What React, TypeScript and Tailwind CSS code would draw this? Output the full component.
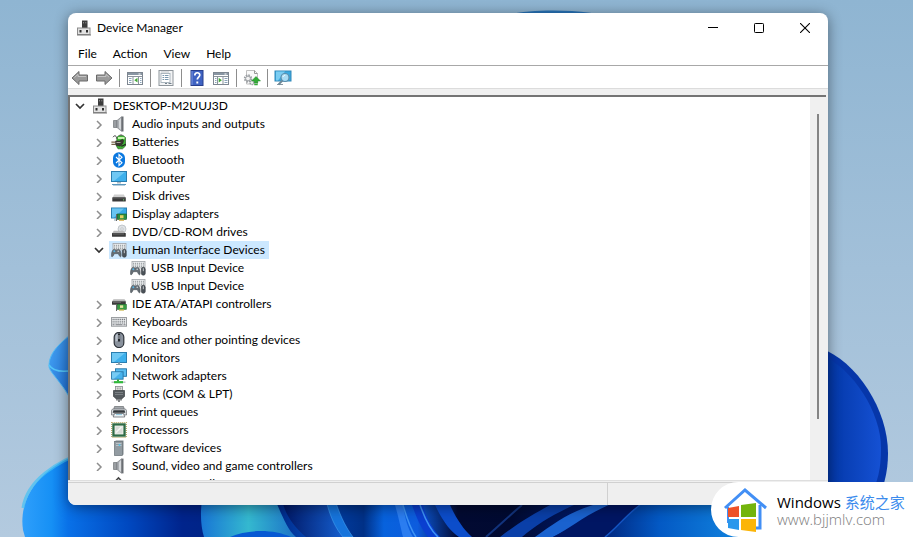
import { useState } from "react";
import type { ReactNode } from "react";

function Icon({ children }: { children: ReactNode }) {
  return (
    <svg width="16" height="16" viewBox="0 0 16 16" className="shrink-0" aria-hidden="true">
      {children}
    </svg>
  );
}

const DeviceIcon = () => (
  <Icon>
    <rect x="6" y="0.5" width="5.5" height="7.5" fill="#3c3c3c" />
    <path d="M7.5 2v1.4M9.8 2v1.4" stroke="#9a9a9a" strokeWidth="0.8" />
    <path d="M8.5 8v1" stroke="#333" />
    <rect x="1.5" y="8" width="12.5" height="6.5" fill="#e2e2e2" stroke="#8c8c8c" />
    <rect x="3.5" y="10" width="2" height="2.5" fill="#2d2d2d" />
    <rect x="10" y="10" width="2" height="2.5" fill="#2d2d2d" />
    <path d="M1 15h14" stroke="#777" />
  </Icon>
);

const SpeakerIcon = () => (
  <Icon>
    <path d="M2.5 4.5h3.5v7H2.5z" fill="#9a9ea2" stroke="#62666a" strokeWidth="0.6" />
    <path d="M6 4.5 10.5 0.8v14.4L6 11.5z" fill="#a9adb1" stroke="#777b80" strokeWidth="0.6" />
    <path d="M8 4.2 10 2v12l-2-2z" fill="#d4d7da" />
    <path d="M11.5 0.6v14.8" stroke="#6a6e73" strokeWidth="2" />
  </Icon>
);

const BatteryIcon = () => (
  <Icon>
    <path d="M6 3.2 8 1.5h4l2.5 2v8.5l-3 2.8H7L5.5 12z" fill="#3fb535" stroke="#2b5d25" strokeWidth="0.7" />
    <path d="M7 4h6.5" stroke="#c4f5ab" strokeWidth="2" />
    <path d="M8.3 1.4c1-.8 2.5-.8 3.4 0" stroke="#777" fill="none" />
    <path d="M2 3.2C3.5.6 6 2 5.4 4.6" stroke="#333" fill="none" strokeWidth="0.9" />
    <path d="M4.5 7h4l3-1.8 1.2 1.3-1 3.3L9 12.2 4.5 11z" fill="#3b3833" stroke="#201f1c" strokeWidth="0.5" />
    <path d="M5.5 8.5h4" stroke="#a9a49c" />
    <path d="M0.4 8.2h4M0.4 10.4h4" stroke="#77634a" strokeWidth="1.2" />
    <path d="M10 12c1.8.5 3-1.2 4.8-1.6" stroke="#222" fill="none" strokeWidth="1.1" />
  </Icon>
);

const BluetoothIcon = () => (
  <Icon>
    <rect x="2" y="0.2" width="12" height="15.6" rx="5.8" fill="#0a78e0" />
    <path d="m5 5 6 5.8-3 2.7V2.5l3 2.7L5 11" fill="none" stroke="#fff" strokeWidth="1.1" />
  </Icon>
);

const ComputerIcon = () => (
  <Icon>
    <rect x="0.5" y="1.5" width="15" height="10" fill="#3eb0ec" stroke="#2a7eb0" />
    <path d="M1 2h13L3 11H1z" fill="#83d3f8" opacity="0.7" />
    <path d="M6 12h4v1.5H6z" fill="#a9bac4" />
    <path d="M1 14.5h14" stroke="#5b96bd" />
    <path d="M2 15.5h12" stroke="#b7cfdd" />
  </Icon>
);

const MonitorIcon = () => (
  <Icon>
    <rect x="0.5" y="2.5" width="15" height="10" fill="#3eb0ec" stroke="#2a7eb0" />
    <path d="M1 3h13L3 12H1z" fill="#83d3f8" opacity="0.7" />
    <path d="M7 12.5h2V14H7z" fill="#8aa0ad" />
    <path d="M5 14.5h6" stroke="#8aa0ad" />
  </Icon>
);

const DiskIcon = () => (
  <Icon>
    <path d="M3.2 6.5h9.6l2 3.5H1.3z" fill="#cfcfcf" />
    <rect x="1.3" y="9.3" width="13.5" height="4.2" rx="0.6" fill="#3a3a3a" />
    <path d="M2 10h12" stroke="#6b6b6b" strokeWidth="0.8" />
    <circle cx="12.6" cy="11.8" r="0.6" fill="#6fdc6f" />
  </Icon>
);

const DisplayIcon = () => (
  <Icon>
    <rect x="0.5" y="2" width="15" height="10" fill="#37a9e8" stroke="#2a7eb0" />
    <path d="M1 2.5h12L3 11.5H1z" fill="#7ed0f7" opacity="0.7" />
    <path d="M3 14h3" stroke="#8aa0ad" />
    <path d="M5.5 8v7" stroke="#666" />
    <rect x="6.3" y="8" width="9.2" height="5.5" fill="#2c8e3f" stroke="#175f27" strokeWidth="0.6" />
    <rect x="9" y="9.2" width="3.5" height="3" fill="#e3cf61" />
    <path d="M8 14.2h5" stroke="#d2a63b" strokeWidth="1.2" />
  </Icon>
);

const DvdIcon = () => (
  <Icon>
    <circle cx="11" cy="5" r="4" fill="#dfe3e6" stroke="#b2b7bb" strokeWidth="0.7" />
    <circle cx="11" cy="5" r="1.2" fill="#fff" stroke="#a3a8ac" strokeWidth="0.6" />
    <path d="M2.8 6.8h9.6l2.2 2.6H1z" fill="#b8b8b8" />
    <rect x="1" y="9" width="13.8" height="3.8" rx="0.6" fill="#3a3a3a" />
    <path d="M2 10h11" stroke="#777" strokeWidth="0.8" />
  </Icon>
);

const HidIcon = () => (
  <Icon>
    <rect x="2" y="1.5" width="13" height="6.5" fill="#eceeef" stroke="#a0a4a8" strokeWidth="0.8" />
    <path d="M3 3.3h11M3 5h11M3 6.7h11" stroke="#868b90" strokeDasharray="1.2 0.8" strokeWidth="0.9" />
    <path d="M0.6 14.5c-.5-3 .5-6.5 2-7 1-.4 1.6.4 2.7.4s1.7-.8 2.7-.4c1.5.5 2.5 4 2 7-.7 1-1.7-.4-2.7-2.8h-4c-1 2.4-2 3.8-2.7 2.8z" fill="#666e75" stroke="#434a50" strokeWidth="0.5" />
    <circle cx="3.3" cy="9.3" r="1" fill="#53b4e7" />
    <circle cx="7.2" cy="9.3" r="0.8" fill="#d2d6d9" />
    <rect x="11.3" y="7.3" width="4" height="8" rx="2" fill="#4b5258" stroke="#30353a" strokeWidth="0.5" />
    <path d="M13.3 8.2v3" stroke="#c8ccd0" />
  </Icon>
);

const IdeIcon = () => (
  <Icon>
    <path d="M2.5 3.2h11l1.8 2.3H1z" fill="#b8b8b8" />
    <rect x="1" y="5.2" width="13.8" height="3.6" rx="0.5" fill="#3b3b3b" />
    <path d="M2 6.3h8" stroke="#777" strokeWidth="0.8" />
    <path d="M5.5 8v7" stroke="#666" />
    <rect x="6.3" y="8.3" width="9" height="5" fill="#3a9c41" stroke="#1d6a2b" strokeWidth="0.6" />
    <rect x="9" y="9.3" width="3.2" height="2.6" fill="#e3e6a0" />
    <path d="M8 14h5" stroke="#c8b443" strokeWidth="1.2" />
  </Icon>
);

const KeyboardIcon = () => (
  <Icon>
    <rect x="0.4" y="3.6" width="15.2" height="8.6" fill="#eceeef" stroke="#85898d" strokeWidth="0.8" />
    <path d="M1.5 5.4h13M1.5 7.2h13M1.5 9h13" stroke="#777b80" strokeDasharray="1.2 0.7" strokeWidth="1.1" />
    <path d="M1.5 10.8h2M4.5 10.8h7M12.5 10.8h2" stroke="#777b80" strokeWidth="1.1" />
  </Icon>
);

const MouseIcon = () => (
  <Icon>
    <rect x="3.2" y="0.5" width="9.6" height="15" rx="4.6" fill="#8a929d" stroke="#2d3239" strokeWidth="1.2" />
    <path d="M4.5 5c0-2 1-3 2.500-3.200V9L4.500 9.500z" fill="#b9c1cb" />
    <path d="M8 1.500v8" stroke="#23272c" strokeWidth="2.200" />
    <path d="M8 3v4" stroke="#d6dce4" strokeWidth="0.9" />
  </Icon>
);

const NetworkIcon = () => (
  <Icon>
    <rect x="4.5" y="0.8" width="11" height="7.5" fill="#59bdf0" stroke="#2473a4" strokeWidth="0.9" />
    <rect x="0.6" y="3.8" width="11.5" height="7.4" fill="#45b2ec" stroke="#2473a4" strokeWidth="0.9" />
    <path d="M1 4.300h9L3 10.700H1z" fill="#8bd6f8" opacity="0.7" />
    <path d="M7 11.400v2" stroke="#2faa36" strokeWidth="2" />
    <path d="M0.500 14.200h14" stroke="#b7c1c4" strokeWidth="1.400" />
    <path d="M3 14.200h9" stroke="#2fb83a" strokeWidth="2.200" />
  </Icon>
);

const PortIcon = () => (
  <Icon>
    <rect x="4.500" y="0.500" width="7" height="4.500" fill="#e8e8e8" stroke="#85898d" strokeWidth="0.800" />
    <path d="M6.300 1.500v2M8 1.500v2M9.700 1.500v2" stroke="#777" strokeWidth="0.700" />
    <path d="M2.500 4.500h11v5.700l-2.200 2.300H4.700L2.500 10.200z" fill="#555a5e" stroke="#393d40" strokeWidth="0.700" />
    <path d="M4 6.500h8M4 8.500h8" stroke="#858a8e" strokeWidth="0.800" />
    <path d="M6 12.500v2M10 12.500v2M8 12.500V16" stroke="#4c5053" strokeWidth="1.400" />
  </Icon>
);

const PrinterIcon = () => (
  <Icon>
    <path d="M3.500 2.500h9l1 3.500h-11z" fill="#a3a8ac" stroke="#686c70" strokeWidth="0.700" />
    <path d="M1.500 5h13l1 1.500V11h-15V6.500z" fill="#d5d9dc" stroke="#686c70" strokeWidth="0.700" />
    <path d="M2.500 6.200h11l.8 2.500H1.700z" fill="#34393d" />
    <path d="M3.500 9.500h9L13.800 13H2.200z" fill="#eef4f7" stroke="#53585d" strokeWidth="0.700" />
    <path d="M5 10.600h6" stroke="#8dc6dc" />
  </Icon>
);

const CpuIcon = () => (
  <Icon>
    <rect x="0.700" y="0.700" width="14.600" height="14.600" fill="none" stroke="#b3a25a" strokeWidth="1.200" strokeDasharray="1 1" />
    <rect x="1.300" y="1.300" width="13.400" height="13.400" fill="#2e6b46" />
    <rect x="4" y="4" width="8" height="8" fill="#d8dcd7" stroke="#f5f5f0" strokeWidth="0.800" />
    <path d="M5 10.500 10.500 5" stroke="#f4f6f3" strokeWidth="1.500" />
  </Icon>
);

const SoftwareIcon = () => (
  <Icon>
    <path d="M3.500 1.500 5 0.500h7.500v14L11 15.500H3.500z" fill="#7e878d" />
    <rect x="3.500" y="1.500" width="8" height="14" fill="#929ba1" stroke="#6d757a" strokeWidth="0.600" />
    <path d="M5 3.500h5.500M5 5.500h5.500" stroke="#bac3c9" />
    <circle cx="8.500" cy="5" r="1" fill="#4fc4ea" />
  </Icon>
);

const StorageIcon = () => (
  <Icon>
    <path d="m3.500 6 4-4.200 4 4.200" fill="#c8c8c8" stroke="#444" strokeWidth="1.400" />
    <rect x="2" y="6" width="11" height="8" fill="#888" />
  </Icon>
);

const categories = [
  { name: "Audio inputs and outputs", icon: <SpeakerIcon /> },
  { name: "Batteries", icon: <BatteryIcon /> },
  { name: "Bluetooth", icon: <BluetoothIcon /> },
  { name: "Computer", icon: <ComputerIcon /> },
  { name: "Disk drives", icon: <DiskIcon /> },
  { name: "Display adapters", icon: <DisplayIcon /> },
  { name: "DVD/CD-ROM drives", icon: <DvdIcon /> },
  { name: "Human Interface Devices", icon: <HidIcon />, devices: ["USB Input Device", "USB Input Device"] },
  { name: "IDE ATA/ATAPI controllers", icon: <IdeIcon /> },
  { name: "Keyboards", icon: <KeyboardIcon /> },
  { name: "Mice and other pointing devices", icon: <MouseIcon /> },
  { name: "Monitors", icon: <MonitorIcon /> },
  { name: "Network adapters", icon: <NetworkIcon /> },
  { name: "Ports (COM & LPT)", icon: <PortIcon /> },
  { name: "Print queues", icon: <PrinterIcon /> },
  { name: "Processors", icon: <CpuIcon /> },
  { name: "Software devices", icon: <SoftwareIcon /> },
  { name: "Sound, video and game controllers", icon: <SpeakerIcon /> },
  { name: "Storage controllers", icon: <StorageIcon /> },
];

function Chevron({ open, label, onClick }: { open: boolean; label: string; onClick?: () => void }) {
  return (
    <button
      type="button"
      aria-label={`${open ? "Collapse" : "Expand"} ${label}`}
      onClick={onClick}
      className="flex h-4 w-4 shrink-0 items-center justify-center"
    >
      <svg width="10" height="10" viewBox="0 0 10 10" fill="none" aria-hidden="true">
        {open ? (
          <path d="m1 3 4 4 4-4" stroke="#333" strokeWidth="1.700" />
        ) : (
          <path d="m3 2 4 4-4 4" stroke="#8e8e8e" strokeWidth="1.500" />
        )}
      </svg>
    </button>
  );
}

function DeviceTree() {
  const [open, setOpen] = useState<string[]>(["Human Interface Devices"]);
  const [selected, setSelected] = useState("Human Interface Devices");

  const toggle = (name: string) =>
    setOpen(open.includes(name) ? open.filter((n) => n !== name) : [...open, name]);

  return (
    <ul role="tree" aria-label="Devices" className="min-w-0 flex-1 overflow-hidden bg-white">
      <li role="treeitem" aria-expanded="true" aria-selected="false">
        <div className="flex h-[18px] items-center pl-[2px]">
          <Chevron open label="DESKTOP-M2UUJ3D" />
          <span className="flex items-center gap-[5px] pl-1">
            <DeviceIcon />
            DESKTOP-M2UUJ3D
          </span>
        </div>
        <ul role="group">
          {categories.map((cat) => {
            const isOpen = open.includes(cat.name);
            const isSelected = selected === cat.name;
            return (
              <li key={cat.name} role="treeitem" aria-expanded={isOpen} aria-selected={isSelected}>
                <div className="flex h-[18px] items-center gap-0.5 pl-[21px]">
                  <Chevron open={isOpen} label={cat.name} onClick={() => toggle(cat.name)} />
                  <button
                    type="button"
                    onClick={() => setSelected(cat.name)}
                    className={`flex h-[18px] items-center gap-[5px] whitespace-nowrap pl-0.5 pr-1 ${isSelected ? "bg-[#cce8ff]" : ""}`}
                  >
                    {cat.icon}
                    <span>{cat.name}</span>
                  </button>
                </div>
                {isOpen && cat.devices && (
                  <ul role="group">
                    {cat.devices.map((device, i) => (
                      <li key={i} role="treeitem" aria-selected="false" className="flex h-[18px] items-center gap-[5px] pl-[60px]">
                        <HidIcon />
                        <span>{device}</span>
                      </li>
                    ))}
                  </ul>
                )}
              </li>
            );
          })}
        </ul>
      </li>
    </ul>
  );
}

function ToolButton({ label, children }: { label: string; children: ReactNode }) {
  return (
    <button type="button" aria-label={label} className="flex h-5 w-6 items-center justify-center hover:bg-[#e5f3ff]">
      <svg width="18" height="16" viewBox="0 0 18 16" fill="none" aria-hidden="true">
        {children}
      </svg>
    </button>
  );
}

const Divider = () => <span className="mx-[3px] h-[18px] w-px bg-[#8d8d8d]" />;

function Toolbar() {
  return (
    <div role="toolbar" aria-label="Tools" className="flex h-[23px] items-center border-b border-[#dcdcdc] pt-px">
      <ToolButton label="Back">
        <path d="M1 8 8 1.500V5h8.500v6H8v3.500z" fill="#9a9a9a" stroke="#6a6a6a" />
        <path d="M3.500 7.500 7 4.300V6.500h8" stroke="#c4c4c4" />
      </ToolButton>
      <ToolButton label="Forward">
        <path d="M17 8 10 1.500V5H1.500v6H10v3.500z" fill="#9a9a9a" stroke="#6a6a6a" />
        <path d="M2.500 6.500H11V4.300l3 2.900" stroke="#c4c4c4" />
      </ToolButton>
      <Divider />
      <ToolButton label="Show console tree">
        <rect x="1.500" y="2.500" width="15" height="12" fill="#fff" stroke="#7d8690" />
        <path d="M2 4h14" stroke="#8996a3" strokeWidth="2" />
        <path d="M12.500 4h2" stroke="#fff" />
        <path d="M2 6.500h14M7 7v7M12.500 7v7" stroke="#8b949d" />
        <path d="M3 8.500h2.500M3 10.500h2.500M3 12.500h2.500M14 8.500h1.500M14 10.500h1.500M14 12.500h1.500" stroke="#8ba4ba" />
        <path d="M11.500 7.800v4.800L8.300 10.200z" fill="#43a936" />
      </ToolButton>
      <Divider />
      <ToolButton label="Properties">
        <rect x="2" y="0.500" width="14" height="15" fill="#f3f4f5" stroke="#8e959b" />
        <rect x="4" y="3.500" width="9" height="9" fill="#fff" stroke="#9aa7b1" strokeWidth="0.800" />
        <path d="M5.500 5.500h6M5.500 7.500h6M5.500 9.500h6" stroke="#7997ad" />
        <path d="M7.500 5v6.500" stroke="#fff" strokeWidth="0.800" />
        <path d="M8 13.500h2M11.500 13.500h3" stroke="#73818c" />
        <path d="M4 2h8" stroke="#c0c6ca" />
      </ToolButton>
      <Divider />
      <ToolButton label="Help">
        <rect x="3" y="0.500" width="12" height="15" fill="#3e62c2" stroke="#273e8c" />
        <path d="M4 1v14" stroke="#7b95e1" />
        <path d="M6.800 5.500c0-3.600 5-3.600 5-.4 0 2-2.500 2.200-2.500 4.500" stroke="#fff" strokeWidth="1.700" />
        <path d="M9.300 11.500v2" stroke="#fff" strokeWidth="1.900" />
      </ToolButton>
      <ToolButton label="Show action pane">
        <rect x="1.500" y="2.500" width="15" height="12" fill="#fff" stroke="#7d8690" />
        <path d="M2 4h14" stroke="#8996a3" strokeWidth="2" />
        <path d="M12.500 4h2" stroke="#fff" />
        <path d="M2 6.500h14M5.500 7v7M11 7v7" stroke="#8b949d" />
        <path d="M3 8.500h1.500M3 10.500h1.500M3 12.500h1.500M12.500 8.500h3M12.500 10.500h3M12.500 12.500h3" stroke="#8ba4ba" />
        <path d="M6.700 7.800v4.800l3.200-2.400z" fill="#43a936" />
      </ToolButton>
      <Divider />
      <ToolButton label="Update driver">
        <path d="M3.500 0.500h8l3 3V14h-11z" fill="#fafafa" stroke="#c0c0c0" />
        <path d="M11.500 0.500v3h3" stroke="#999" />
        <circle cx="5" cy="8.500" r="3.200" stroke="#9a9ea2" strokeWidth="2" strokeDasharray="1.500 1" />
        <circle cx="5" cy="8.500" r="2.400" fill="#f2f2f2" stroke="#9a9ea2" />
        <circle cx="9" cy="12.500" r="2" fill="#eee" stroke="#9a9ea2" strokeWidth="1.400" strokeDasharray="1.300 0.700" />
        <path d="m13 6.500 4.500 4.500h-2.800v2h-3.400v-2H8.500z" fill="#31ad35" stroke="#208628" strokeWidth="0.500" />
        <path d="M11.300 14.500h3.400" stroke="#31ad35" strokeWidth="1.400" />
      </ToolButton>
      <Divider />
      <ToolButton label="Scan for hardware changes">
        <rect x="1" y="1" width="16" height="10" fill="#3aa9df" stroke="#3287b8" />
        <path d="M2 1.500h9L4 10.500H2z" fill="#7bcdf2" />
        <path d="M3 14.500h6" stroke="#8797a1" />
        <path d="m8.500 10.500-4 4" stroke="#6e8796" strokeWidth="1.800" />
        <circle cx="11" cy="7.500" r="4" fill="#a9dcf4" stroke="#5c8eac" strokeWidth="1.200" />
        <path d="M9 7c.3-1.200 1.200-1.700 2.200-1.700" stroke="#fff" />
      </ToolButton>
    </div>
  );
}

function Wallpaper() {
  return (
    <svg
      className="absolute inset-0 h-full w-full"
      viewBox="0 0 913 537"
      preserveAspectRatio="xMidYMid slice"
      aria-hidden="true"
    >
      <defs>
        <linearGradient id="sky" x1="0" y1="0" x2="0" y2="1">
          <stop offset="0" stopColor="#8fb5d2" />
          <stop offset="0.500" stopColor="#a2c0d9" />
          <stop offset="1" stopColor="#b3cadf" />
        </linearGradient>
        <linearGradient id="petalLeft" x1="22" y1="0" x2="140" y2="0" gradientUnits="userSpaceOnUse">
          <stop offset="0" stopColor="#2f9ffb" />
          <stop offset="0.250" stopColor="#1690f5" />
          <stop offset="0.390" stopColor="#0971e8" />
          <stop offset="1" stopColor="#0045c0" />
        </linearGradient>
        <linearGradient id="petalRight" x1="0" y1="0" x2="1" y2="0">
          <stop offset="0" stopColor="#0033a0" />
          <stop offset="1" stopColor="#1551d4" />
        </linearGradient>
        <linearGradient id="tip" x1="0" y1="0" x2="1" y2="1">
          <stop offset="0" stopColor="#48a7f5" />
          <stop offset="1" stopColor="#1763cf" />
        </linearGradient>
        <linearGradient id="base" x1="68" y1="0" x2="740" y2="0" gradientUnits="userSpaceOnUse">
          <stop offset="0" stopColor="#0971e8" />
          <stop offset="0.090" stopColor="#0048c0" />
          <stop offset="0.170" stopColor="#00248c" />
          <stop offset="0.300" stopColor="#00237c" />
          <stop offset="0.360" stopColor="#0346b4" />
          <stop offset="0.440" stopColor="#003086" />
          <stop offset="0.470" stopColor="#0762dd" />
          <stop offset="0.520" stopColor="#0d5cde" />
          <stop offset="0.580" stopColor="#020a32" />
          <stop offset="0.660" stopColor="#010a31" />
          <stop offset="0.780" stopColor="#001c70" />
          <stop offset="0.880" stopColor="#0359c4" />
          <stop offset="1" stopColor="#1183de" />
        </linearGradient>
        <linearGradient id="teal" x1="0" y1="0" x2="1" y2="0">
          <stop offset="0" stopColor="#1876d5" />
          <stop offset="0.500" stopColor="#34b8cf" />
          <stop offset="1" stopColor="#1c72c7" />
        </linearGradient>
        <linearGradient id="fold" x1="0" y1="0" x2="1" y2="0">
          <stop offset="0" stopColor="#001663" />
          <stop offset="1" stopColor="#1766da" />
        </linearGradient>
      </defs>
      <rect width="913" height="537" fill="url(#sky)" />
      <path d="M490 20c24-12 97-13 130 0z" fill="#2874ba" />
      <path d="M75 331C57 345 49 354 49 366c0 7 16 18 26 43z" fill="url(#tip)" stroke="#55bdf5" />
      <path d="M49 365c5 8 16 7 26 5" fill="none" stroke="#54c6f8" strokeWidth="1.500" />
      <path d="M90 450C43 464 18 495 23 530l2 7h120V450z" fill="url(#petalLeft)" />
      <path d="M90 450C57 461 27 480 23 508" fill="none" stroke="#41c0f5" strokeWidth="3" opacity="0.700" />
      <path d="M820 348c37 13 68 62 68 105 0 22-5 40-20 65h-48z" fill="#0636a9" />
      <path d="M820 354c34 15 61 59 61 94 0 20-3 35-12 50h-49z" fill="url(#petalRight)" />
      <path d="M68 490h672v47H68z" fill="url(#base)" />
      <path d="M202 500c-2 14-1 27 2 37h92c-9-7-15-25-21-37z" fill="url(#teal)" />
      <path d="M230 537c18-8 44-8 61 0z" fill="#0759d3" />
      <path d="M282 500c3 14 11 26 24 37h44c-10-8-18-23-24-37z" fill="url(#fold)" />
      <path d="M326 500c4 17 10 29 17 37h10c-9-12-14-25-18-37z" fill="#1674dc" stroke="#4daaf5" strokeWidth="0.500" />
      <path d="M395 505c4 14 6 24 8 32h10c-6-10-8-20-10-32z" fill="#2b7df0" />
      <path d="M412 505c5 14 10 25 16 32h12c-9-10-14-20-17-32z" fill="#0a3fd0" />
      <path d="M403 505c4 14 8 25 13 32M420 505c5 14 10 25 18 32" fill="none" stroke="#3d93f5" strokeWidth="1.500" />
      <path d="M435 505c8 17 16 27 24 32h13c-9-8-16-19-22-32z" fill="#0c4dca" />
      <path d="M486 537c14-12 24-22 36-32" fill="none" stroke="#12337c" strokeWidth="2" />
      <path d="M500 537c18-14 32-22 50-32h24c-22 10-38 20-52 32z" fill="#0a3fa8" />
      <path d="M535 537c20-14 32-24 58-32h16c-20 10-34 22-56 32z" fill="#1a62cf" />
      <path d="M553 537c16-8 32-22 56-32h30c-12 10-20 23-35 32z" fill="#001663" />
      <path d="M605 537c12-9 21-22 35-32" fill="none" stroke="#1456c5" strokeWidth="1.500" />
    </svg>
  );
}

function Watermark() {
  return (
    <a
      href="#"
      className="absolute right-0 bottom-0 flex h-[55px] w-[202px] items-center rounded-l-full bg-white pl-3"
    >
      <svg width="46" height="46" viewBox="0 0 46 46" fill="none" className="shrink-0" aria-hidden="true">
        <path d="M2 21 22 3l21 18" stroke="#428ff5" strokeWidth="3" />
        <path d="M37 18v23h-5" stroke="#428ff5" strokeWidth="3" />
        <path d="M5 20v16" stroke="#428ff5" strokeWidth="2" />
        <path d="m5 21 11-2v11H5z" fill="#ee5128" />
        <path d="m18 18 15-2v14H18z" fill="#73b40c" />
        <path d="M5 32h11v11L5 41z" fill="#2997ec" />
        <path d="M18 32h15v13l-15-2z" fill="#fbb508" />
      </svg>
      <span className="ml-2 flex flex-col whitespace-nowrap">
        <span className="text-[15px] leading-[18px] text-black">
          <span className="font-medium">Windows</span> <span className="text-[#3b8bed]">系统之家</span>
        </span>
        <span className="text-[15px] leading-4 font-light text-[#7c7c7c]">www.bjjmlv.com</span>
      </span>
    </a>
  );
}

export default function App() {
  return (
    <div className="relative flex h-screen overflow-hidden pt-[13px] pr-[85px] pb-8 pl-[68px] font-['Open_Sans','Noto_Sans_CJK_SC',sans-serif] text-xs text-black">
      <Wallpaper />

      {/* Window */}
      <div className="relative flex min-w-0 flex-1 flex-col overflow-hidden rounded-lg bg-white font-[Lato,sans-serif] shadow-[0_2px_14px_rgba(0,0,0,0.45)]">
        <header className="flex h-[30px] shrink-0 items-center pl-2">
          <DeviceIcon />
          <h1 className="ml-[5px] flex-1">Device Manager</h1>
          <button type="button" aria-label="Minimize" className="flex h-full w-[46px] items-center justify-center hover:bg-gray-100">
            <svg width="10" height="10" viewBox="0 0 10 10" aria-hidden="true">
              <path d="M0 4.500h10" stroke="#000" />
            </svg>
          </button>
          <button type="button" aria-label="Maximize" className="flex h-full w-[46px] items-center justify-center hover:bg-gray-100">
            <svg width="10" height="10" viewBox="0 0 10 10" aria-hidden="true">
              <rect x="0.500" y="0.500" width="9" height="9" rx="0.800" fill="none" stroke="#000" />
            </svg>
          </button>
          <button type="button" aria-label="Close" className="flex h-full w-[46px] items-center justify-center hover:bg-red-500">
            <svg width="10" height="10" viewBox="0 0 10 10" aria-hidden="true">
              <path d="m0 0 10 10M10 0 0 10" stroke="#000" strokeWidth="1.100" />
            </svg>
          </button>
        </header>

        <nav className="flex h-[23px] shrink-0 items-center gap-4 border-b border-[#a8a8a8] pl-[10px]">
          <button type="button">File</button>
          <button type="button">Action</button>
          <button type="button">View</button>
          <button type="button">Help</button>
        </nav>

        <Toolbar />

        {/* Tree */}
        <main className="flex min-h-0 flex-1 bg-[#f0f0f0] pt-1.5 pr-0.5">
          <div className="flex min-w-0 flex-1 border-t-2 border-l-2 border-[#747474]">
            <DeviceTree />
            <div className="flex w-4 flex-col items-center bg-[#f0f0f0] pt-[17px]">
              <div className="h-5/6 w-[2px] bg-[#858585]" />
            </div>
          </div>
        </main>

        <footer className="flex h-[25px] shrink-0 border-t border-[#dedede] bg-[#efefef] pt-px">
          <div className="flex-1 border-t border-r border-[#d0d0d0]" />
          <div className="w-[220px] border-t border-[#d0d0d0]" />
        </footer>
      </div>

      <Watermark />
    </div>
  );
}
